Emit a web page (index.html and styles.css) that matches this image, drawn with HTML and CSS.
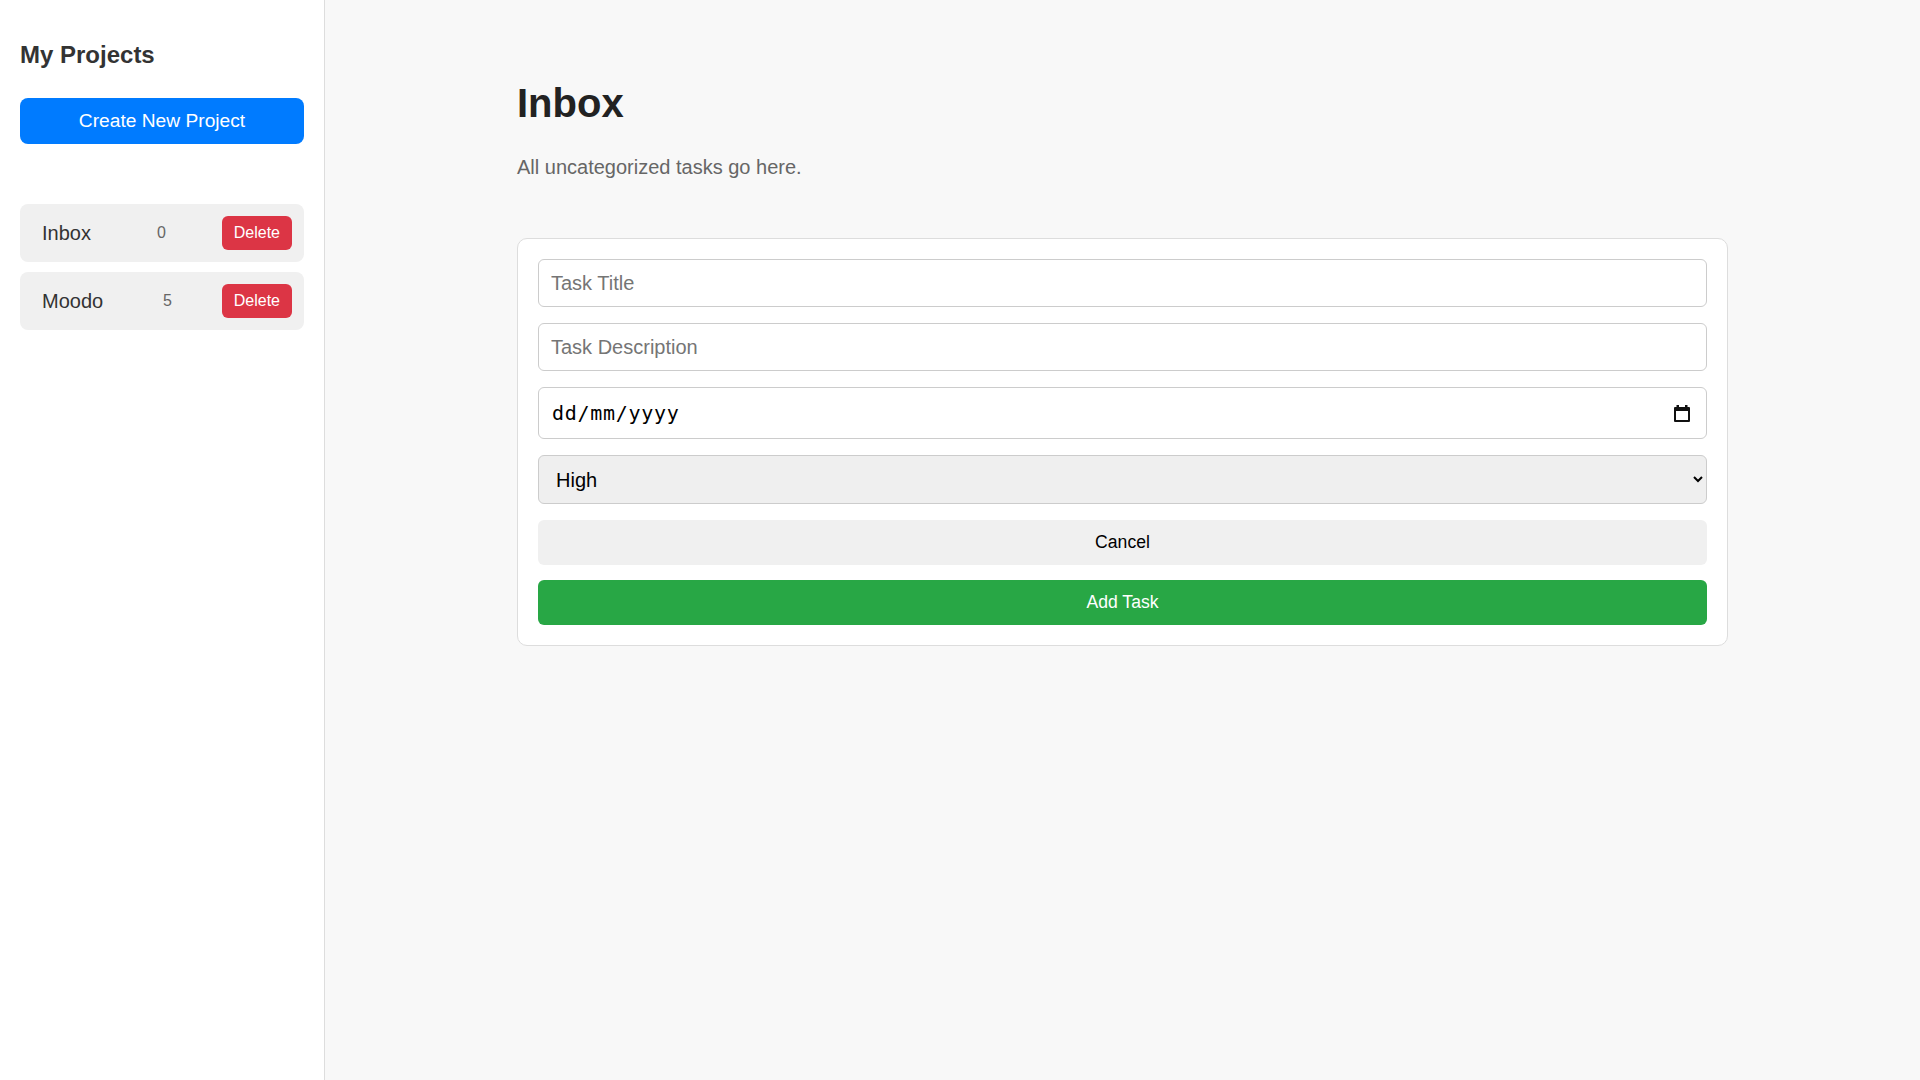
FILE: index.html
```html
<!DOCTYPE html>
<html lang="en">
<head>
<meta charset="utf-8">
<title>Projects</title>
<link rel="stylesheet" href="styles.css">
</head>
<body>
<aside class="sidebar">
  <h2 class="sidebar-title">My Projects</h2>
  <button class="btn-create">Create New Project</button>
  <ul class="project-list">
    <li class="project-item">
      <span class="project-name">Inbox</span>
      <span class="project-count">0</span>
      <button class="btn-delete">Delete</button>
    </li>
    <li class="project-item">
      <span class="project-name">Moodo</span>
      <span class="project-count">5</span>
      <button class="btn-delete">Delete</button>
    </li>
  </ul>
</aside>
<main class="main">
  <div class="container">
    <h1 class="page-title">Inbox</h1>
    <p class="page-desc">All uncategorized tasks go here.</p>
    <form class="task-form">
      <input class="field" type="text" placeholder="Task Title">
      <input class="field" type="text" placeholder="Task Description">
      <div class="field field-date" role="textbox" aria-label="Due date">
        <span class="date-text">dd/mm/yyyy</span>
        <svg class="date-icon" width="16" height="17" viewBox="0 0 16 17" aria-hidden="true">
          <rect x="2.5" y="0" width="2.5" height="3" fill="#111"/>
          <rect x="11" y="0" width="2.5" height="3" fill="#111"/>
          <path d="M1 2h14a1 1 0 0 1 1 1v13a1 1 0 0 1-1 1H1a1 1 0 0 1-1-1V3a1 1 0 0 1 1-1z M2 6v9h12V6z" fill="#111" fill-rule="evenodd"/>
        </svg>
      </div>
      <select class="field field-select">
        <option>High</option>
        <option>Medium</option>
        <option>Low</option>
      </select>
      <button type="button" class="btn-cancel">Cancel</button>
      <button type="button" class="btn-add">Add Task</button>
    </form>
  </div>
</main>
</body>
</html>
```
FILE: styles.css
```css
* { box-sizing: border-box; }
html, body { height: 100%; }
body {
  margin: 0;
  display: flex;
  min-height: 100vh;
  font-family: "Liberation Sans", Arial, sans-serif;
  background: #f8f8f8;
  color: #333;
}
.sidebar {
  width: 325px;
  flex: 0 0 325px;
  background: #fff;
  border-right: 1px solid #ddd;
  padding: 41px 20px 20px;
}
.sidebar-title {
  margin: 0 0 29px;
  font-size: 24px;
  font-weight: bold;
  color: #333;
}
.btn-create {
  display: block;
  width: 100%;
  height: 46px;
  border: none;
  border-radius: 8px;
  background: #007bff;
  color: #fff;
  font-family: inherit;
  font-size: 19.2px;
  cursor: pointer;
}
.project-list {
  list-style: none;
  margin: 60px 0 0;
  padding: 0;
  display: flex;
  flex-direction: column;
  gap: 10px;
}
.project-item {
  display: flex;
  align-items: center;
  justify-content: space-between;
  height: 58px;
  padding: 0 12px 0 22px;
  background: #f0f0f0;
  border-radius: 8px;
}
.project-name {
  font-size: 20px;
  color: #333;
}
.project-count {
  margin-left: 10px;
  font-size: 16px;
  color: #666;
}
.btn-delete {
  height: 34px;
  padding: 0 12px;
  border: none;
  border-radius: 6px;
  background: #dc3545;
  color: #fff;
  font-family: inherit;
  font-size: 16px;
  cursor: pointer;
}
.main {
  flex: 1;
  padding: 0 40px;
}
.container {
  width: 1211px;
  margin: 0 auto;
  padding-top: 80px;
}
.page-title {
  margin: 0 0 30px;
  font-size: 40px;
  line-height: 46px;
  font-weight: bold;
  color: #222;
}
.page-desc {
  margin: 0 0 59px;
  font-size: 20px;
  line-height: 23px;
  color: #666;
}
.task-form {
  display: flex;
  flex-direction: column;
  gap: 16px;
  background: #fff;
  border: 1px solid #ddd;
  border-radius: 10px;
  padding: 20px;
}
.field {
  display: block;
  width: 100%;
  height: 48px;
  padding: 0 12px;
  border: 1px solid #ccc;
  border-radius: 6px;
  background: #fff;
  font-family: "Liberation Sans", Arial, sans-serif;
  font-size: 20px;
  color: #000;
}
.field::placeholder { color: #757575; }
.field-date {
  display: flex;
  align-items: center;
  justify-content: space-between;
  height: 52px;
  padding: 0 16px 0 13px;
  font-family: "DejaVu Sans Mono", monospace;
  font-size: 20px;
  color: #000;
}
.date-text { letter-spacing: 0.7px; }
.date-icon { display: block; flex: none; }
.field-select {
  height: 49px;
  padding: 0 12px 0 13px;
  background: #efefef;
}
.btn-cancel, .btn-add {
  display: block;
  width: 100%;
  height: 45px;
  border: none;
  border-radius: 6px;
  font-family: inherit;
  font-size: 17.6px;
  cursor: pointer;
}
.btn-cancel {
  background: #f0f0f0;
  color: #000;
}
.btn-add {
  margin-top: -1px;
  background: #28a745;
  color: #fff;
}
```
